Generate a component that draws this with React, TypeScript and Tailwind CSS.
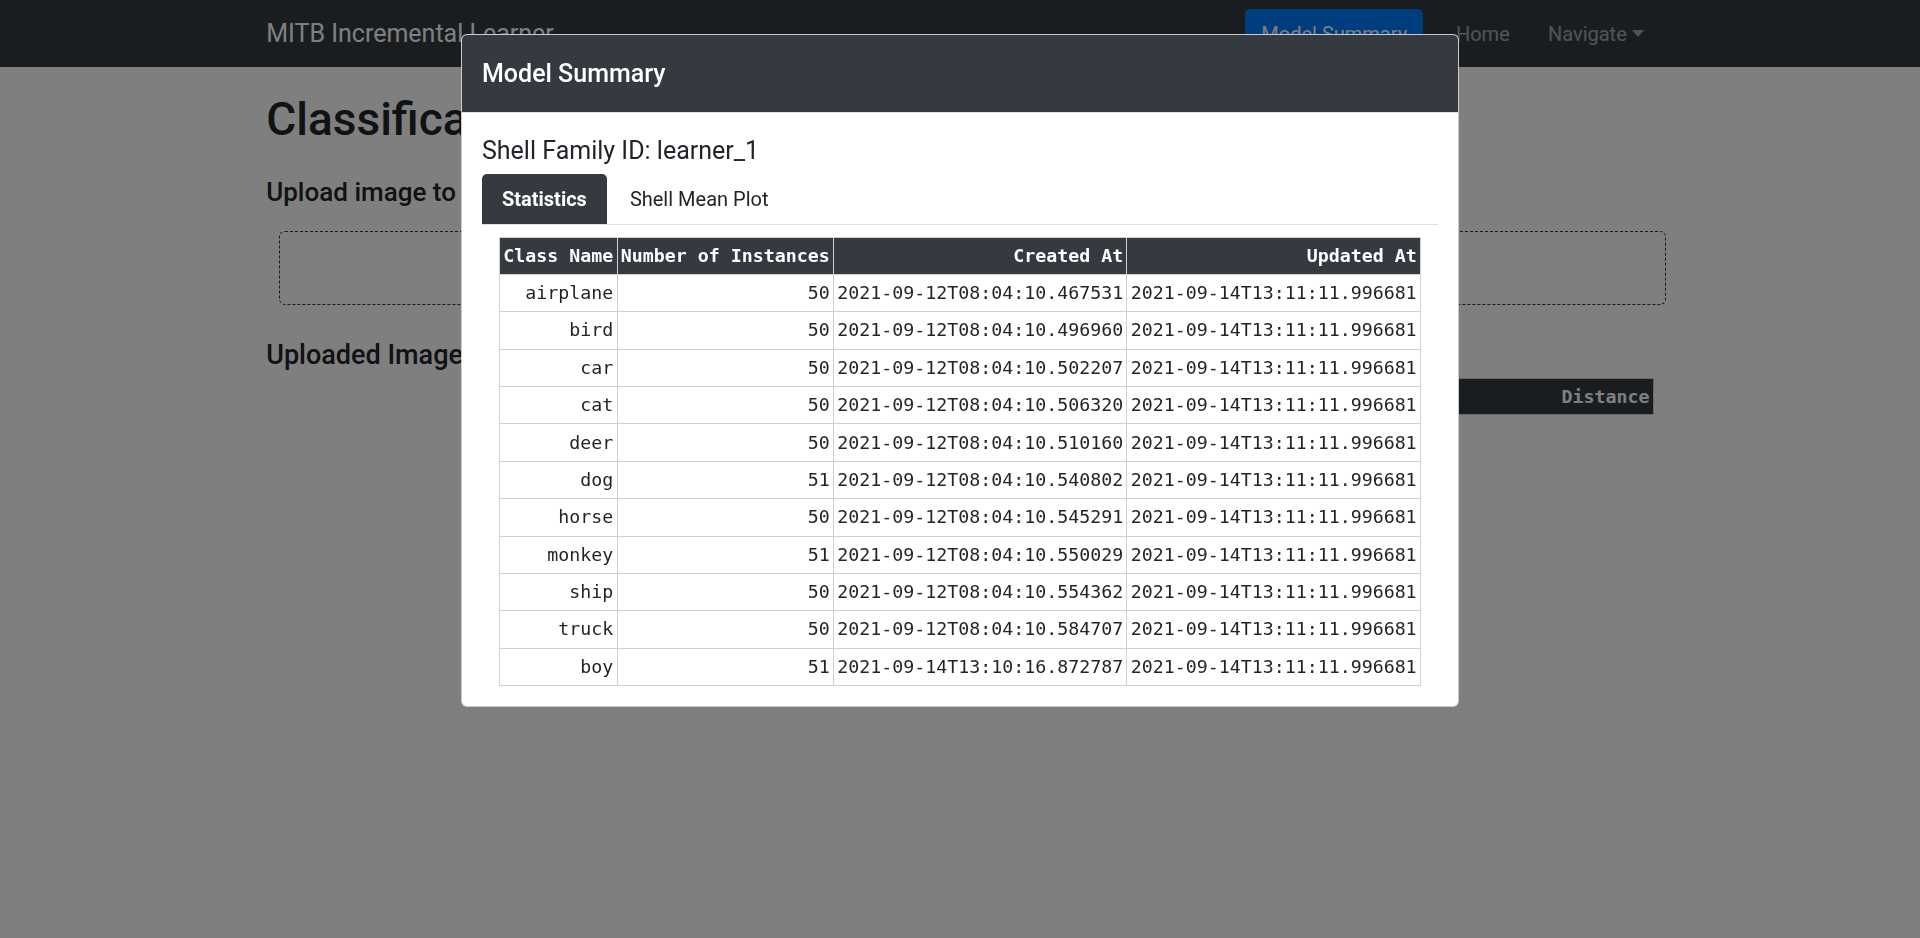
import React from 'react';

// Classes per learner in the shell family
const ROWS = [
  { name: 'airplane', count: 50, created: '2021-09-12T08:04:10.467531' },
  { name: 'bird', count: 50, created: '2021-09-12T08:04:10.496960' },
  { name: 'car', count: 50, created: '2021-09-12T08:04:10.502207' },
  { name: 'cat', count: 50, created: '2021-09-12T08:04:10.506320' },
  { name: 'deer', count: 50, created: '2021-09-12T08:04:10.510160' },
  { name: 'dog', count: 51, created: '2021-09-12T08:04:10.540802' },
  { name: 'horse', count: 50, created: '2021-09-12T08:04:10.545291' },
  { name: 'monkey', count: 51, created: '2021-09-12T08:04:10.550029' },
  { name: 'ship', count: 50, created: '2021-09-12T08:04:10.554362' },
  { name: 'truck', count: 50, created: '2021-09-12T08:04:10.584707' },
  { name: 'boy', count: 51, created: '2021-09-14T13:10:16.872787' },
];

const UPDATED_AT = '2021-09-14T13:11:11.996681';

const th = 'px-[3.25px] py-[3.2px] leading-[30px] text-right font-bold border border-[#d0d0d0] whitespace-nowrap';
const td = 'px-[3.25px] py-[3.2px] leading-[30px] text-right border border-[#d0d0d0] whitespace-nowrap';

function Navbar() {
  return (
    <nav className="bg-[#343a40] h-[67px]">
      <div className="w-[1425px] mx-auto px-[18.75px] h-full flex items-center justify-between">
        <a className="text-white text-[25px] leading-[37.5px]">MITB Incremental Learner</a>
        <div className="flex items-center text-[20px] leading-[30px]">
          <button className="w-[178px] h-[50px] rounded-[5px] bg-[#007bff] text-white">Model Summary</button>
          <a className="ml-[32.7px] w-[51px] text-white/55">Home</a>
          <a className="ml-[41px] pr-[10px] flex items-center text-white/55">
            Navigate
            <span className="ml-[5px] inline-block w-0 h-0 border-x-[6.5px] border-x-transparent border-t-[7px] border-t-current" />
          </a>
        </div>
      </div>
    </nav>
  );
}

function Page() {
  return (
    <div className="w-[1425px] mx-auto px-[18.75px] text-[#212529]">
      <h1 className="mt-[24px] text-[46px] leading-[56px] font-medium">Classification</h1>
      <h5 className="mt-[30px] text-[26px] leading-[31.2px] font-medium">Upload image to classify</h5>
      <div className="mt-[22.3px] ml-[13px] w-[1387px] h-[74px] border border-dashed border-[#333] rounded-[6px]" />
      <div className="mt-[34.9px] flex">
        <div className="w-1/2 pr-[18.75px]">
          <h4 className="text-[27px] leading-[32.4px] font-medium">Uploaded Image</h4>
        </div>
        <div className="w-1/2 pl-[18.75px] pt-[38.7px]">
          <table className="w-full border-collapse font-['DejaVu_Sans_Mono',monospace] text-[18.27px]">
            <thead>
              <tr className="bg-[#343a40] text-white">
                <th className="px-[3.25px] py-[2.5px] leading-[30px] text-right font-bold border border-[#d0d0d0]">Class Name</th>
                <th className="px-[3.25px] py-[2.5px] leading-[30px] text-right font-bold border border-[#d0d0d0]">Distance</th>
              </tr>
            </thead>
          </table>
        </div>
      </div>
    </div>
  );
}

function ModelSummary() {
  return (
    <div className="fixed inset-0 flex justify-center items-start pt-[34px]">
      <div className="w-[998px] bg-white border border-black/20 rounded-[6px] overflow-hidden">
        <div className="bg-[#343a40] px-[20px] py-[19.5px] border-b border-[#dee2e6]">
          <h5 className="text-white text-[25px] leading-[37.5px] font-medium">Model Summary</h5>
        </div>
        <div className="p-[20px]">
          <h5 className="mt-[3px] mb-[8.5px] text-[25px] leading-[30px] text-[#212529]">Shell Family ID: learner_1</h5>

          <div className="flex border-b border-[#dee2e6] text-[20px] leading-[30px]">
            <button className="h-[50px] px-[20px] -mb-px rounded-t-[5px] bg-[#343a40] text-white font-bold">Statistics</button>
            <button className="h-[50px] px-[20px] ml-[3px] text-[#212529]">Shell Mean Plot</button>
          </div>

          <table className="mt-[11.5px] mx-auto border-collapse font-['DejaVu_Sans_Mono',monospace] text-[18.27px] text-[#212529]">
            <thead>
              <tr className="bg-[#343a40] text-white">
                <th className={th}>Class Name</th>
                <th className={th}>Number of Instances</th>
                <th className={th}>Created At</th>
                <th className={th}>Updated At</th>
              </tr>
            </thead>
            <tbody>
              {ROWS.map((row) => (
                <tr key={row.name}>
                  <td className={td}>{row.name}</td>
                  <td className={td}>{row.count}</td>
                  <td className={td}>{row.created}</td>
                  <td className={td}>{UPDATED_AT}</td>
                </tr>
              ))}
            </tbody>
          </table>
        </div>
      </div>
    </div>
  );
}

export default function App() {
  return (
    <div className="min-h-screen bg-white font-['Roboto','Segoe_UI',sans-serif]">
      <Navbar />
      <Page />
      {/* backdrop */}
      <div className="fixed inset-0 bg-black/50" />
      <ModelSummary />
    </div>
  );
}
